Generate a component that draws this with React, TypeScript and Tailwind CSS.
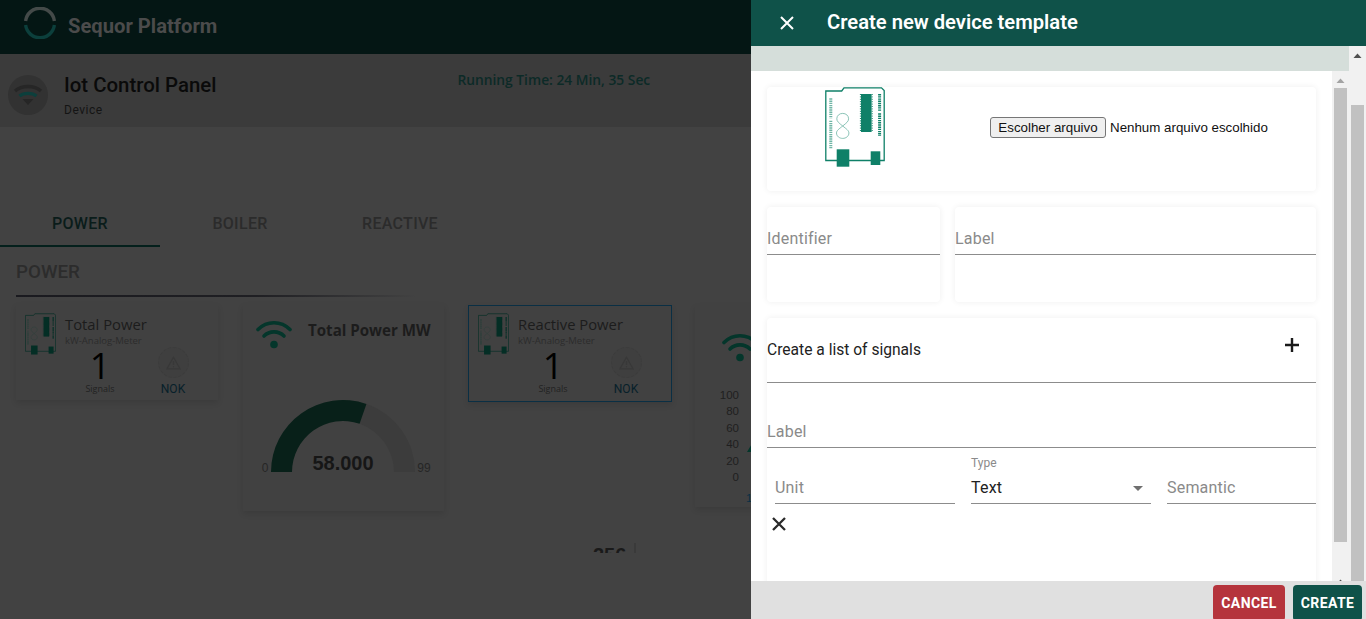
import React from "react";

function Board({ w, h, c, light }: { w: number; h: number; c: string; light: string }) {
  return (
    <svg width={w} height={h} viewBox="0 0 60 80" className="block shrink-0">
      <path d="M0.8 4 H16.7 L19 0.8 H56.5 L59.2 3.5 V73.5 H0.8 Z" fill="none" stroke={c} strokeWidth="1.3" />
      <rect x="36" y="7" width="10.6" height="38" fill={c} />
      <path d="M35.4 7 V45 M47.2 7 V45" stroke={c} strokeWidth="1" strokeDasharray="1 1.4" />
      <path d="M5.8 11.3 V31.3 M5.8 33.7 V61.3" stroke={light} strokeWidth="3" strokeDasharray="1.4 0.8" />
      <path d="M54.6 7 V23.7 M54.6 26.3 V49" stroke={c} strokeWidth="3" strokeDasharray="1.4 0.8" />
      <path d="M17.7 39 C14 36 11.8 34.5 11.8 31.8 C11.8 28.6 14.4 26.4 17.7 26.4 C21 26.4 23.6 28.6 23.6 31.8 C23.6 34.5 21.4 36 17.7 39 C14 42 11.5 43.5 11.5 46 C11.5 49.2 14.4 51.4 17.7 51.4 C21 51.4 23.9 49.2 23.9 46 C23.9 43.5 21.4 42 17.7 39 Z" fill="none" stroke={light} strokeWidth="0.8" />
      <rect x="11.7" y="62.3" width="12.6" height="17.4" fill={c} />
      <rect x="45.7" y="64.3" width="9.6" height="13.7" fill={c} />
    </svg>
  );
}

function WifiGlyph({ c = "#04362b" }: { c?: string }) {
  return (
    <svg width="36" height="30" viewBox="0 0 36 30" className="block shrink-0">
      <path d="M2 10.5 C11 1.5 25 1.5 34 10.5" fill="none" stroke={c} strokeWidth="3.6" strokeLinecap="round" />
      <path d="M8 17 C13.5 11.5 22.5 11.5 28 17" fill="none" stroke={c} strokeWidth="3.6" strokeLinecap="round" />
      <circle cx="18" cy="25.5" r="3.8" fill={c} />
    </svg>
  );
}

function StatusCard({ title, selected }: { title: string; selected?: boolean }) {
  return (
    <div
      className={
        "flex shrink-0 bg-[#414141] shadow-[0_3px_6px_rgba(0,0,0,0.1)] " +
        (selected
          ? "mt-px h-[97px] w-[204px] border border-[#0a2f44] pl-[9px] pt-[7px]"
          : "h-[96px] w-[202px] pl-[9px] pt-[9px]")
      }
    >
      <Board w={31} h={42} c="#042e25" light="#2a3f3a" />
      <div className="ml-[9px] flex w-[150px] flex-col pt-[2px]">
        <div className="font-['Open_Sans',sans-serif] text-[14.8px] leading-[18px] text-[#1c1c1c]">{title}</div>
        <div className="mt-[2px] font-['Open_Sans',sans-serif] text-[9.5px] leading-[12px] text-[#2c2c2c]">kW-Analog-Meter</div>
        <div className="flex">
          <div className="flex w-[70px] flex-col items-center">
            <div className="mt-[2px] font-['Open_Sans',sans-serif] text-[36px] font-medium leading-[34px] text-black">1</div>
            <div className="mt-[-1px] font-['Open_Sans',sans-serif] text-[9px] leading-[14px] text-[#222222]">Signals</div>
          </div>
          <div className="ml-[18px] flex w-[40px] flex-col items-center">
            <div className="flex h-[31px] w-[31px] items-center justify-center rounded-full border border-dashed border-[#3c3c3c] bg-[#3f3f3f]">
              <svg width="15" height="14" viewBox="0 0 15 14">
                <path d="M7.5 1.2 L14 12.8 H1 Z" fill="none" stroke="#383838" strokeWidth="1.2" />
                <path d="M7.5 5 V9" stroke="#383838" strokeWidth="1.2" />
                <circle cx="7.5" cy="10.8" r="0.7" fill="#383838" />
              </svg>
            </div>
            <div className="mt-[3px] text-[12px] leading-[16px] text-[#07202a]">NOK</div>
          </div>
        </div>
      </div>
    </div>
  );
}

function GaugeCard() {
  const cx = 100, cy = 167;
  const pt = (r: number, deg: number) => {
    const a = (deg * Math.PI) / 180;
    return `${cx + r * Math.cos(a)} ${cy - r * Math.sin(a)}`;
  };
  const R = 72, r = 51, e = 71;
  return (
    <div className="h-[207px] w-[201px] shrink-0 bg-[#414141] shadow-[0_3px_6px_rgba(0,0,0,0.1)]">
      <div className="flex items-start pl-[13px] pt-[15px]">
        <WifiGlyph />
        <div className="ml-[16px] pt-[1px] font-['Open_Sans',sans-serif] text-[15.1px] font-bold leading-[20px] text-[#1c1c1c]">Total Power MW</div>
      </div>
      <svg width="201" height="162" viewBox="0 0 201 162" className="mt-[-15px] block" overflow="visible">
        <g transform="translate(0,-29)">
          <path d={`M${pt(R, e)} A${R} ${R} 0 0 1 ${pt(R, 0)} L${pt(r, 0)} A${r} ${r} 0 0 0 ${pt(r, e)} Z`} fill="#3c3c3c" />
          <path d={`M${pt(R, 180)} A${R} ${R} 0 0 1 ${pt(R, e)} L${pt(r, e)} A${r} ${r} 0 0 0 ${pt(r, 180)} Z`} fill="#082019" />
          <text x="100" y="165" textAnchor="middle" fontFamily="Liberation Sans, sans-serif" fontWeight="700" fontSize="20" fill="#161616">58.000</text>
          <text x="22" y="167" textAnchor="middle" fontFamily="Liberation Sans, sans-serif" fontSize="12" fill="#262626">0</text>
          <text x="181" y="167" textAnchor="middle" fontFamily="Liberation Sans, sans-serif" fontSize="12" fill="#262626">99</text>
        </g>
      </svg>
    </div>
  );
}

function ChartCard() {
  return (
    <div className="mt-[1px] h-[202px] w-[200px] shrink-0 bg-[#414141] pl-[27px] pt-[27px] shadow-[0_3px_6px_rgba(0,0,0,0.1)]">
      <WifiGlyph />
      <div className="ml-[-27px] mt-[25px] flex">
        <div className="w-[44px] text-right font-['Liberation_Sans',sans-serif] text-[11.5px] leading-[16.4px] text-[#1f1f1f]">
          <div>100</div><div>80</div><div>60</div><div>40</div><div>20</div><div>0</div>
        </div>
        <svg width="60" height="120" viewBox="0 0 60 120" className="block">
          <path d="M8 65 L14 55 V65 Z" fill="#04362b" />
          <text x="7" y="115" fontFamily="Liberation Sans, sans-serif" fontSize="11.5" fill="#0a2f44">1</text>
        </svg>
      </div>
    </div>
  );
}

function Under({ className, children }: { className?: string; children?: React.ReactNode }) {
  return <div className={"flex items-end border-b border-[#8c8c8c] " + (className ?? "")}>{children}</div>;
}

const hint = "text-[16px] leading-[24px] tracking-[0.2px] text-[#8a8a8a]";

function Arrow({ up, c }: { up?: boolean; c: string }) {
  return (
    <svg width="9" height="5" viewBox="0 0 9 5" className="block">
      <path d={up ? "M0.5 5 L4.5 0.5 L8.5 5 Z" : "M0.5 0 L4.5 4.5 L8.5 0 Z"} fill={c} />
    </svg>
  );
}

export default function App() {
  return (
    <div className="relative h-[619px] w-full overflow-hidden bg-[#424242] font-[Roboto,sans-serif]">
      {/* page behind the drawer */}
      <header className="flex h-[54px] items-start bg-[#041614] pl-[24px]">
        <svg width="32" height="32" viewBox="0 0 32 32" className="mt-[7px] block">
          <path d="M1.6 14 A14.5 14.5 0 0 1 30.4 14" fill="none" stroke="#444a49" strokeWidth="3.4" />
          <path d="M1.6 18 A14.5 14.5 0 0 0 30.4 18" fill="none" stroke="#0c3f3c" strokeWidth="3.4" />
        </svg>
        <div className="ml-[12px] mt-[13px] text-[20.2px] font-bold leading-[26px] text-[#4b4b4b]">Sequor Platform</div>
      </header>
      <div className="flex h-[73px] bg-[#3b3b3b]">
        <div className="ml-[8px] mt-[21px] flex h-[40px] w-[40px] items-center justify-center rounded-full bg-[#323232]">
          <svg width="30" height="24" viewBox="0 0 30 24">
            <path d="M2 8 C9 2 21 2 28 8" fill="none" stroke="#262626" strokeWidth="3.4" />
            <path d="M6.5 13 C11 9.5 19 9.5 23.5 13" fill="none" stroke="#0c3f3c" strokeWidth="3.4" />
            <path d="M9.5 16 H20.5 L15 22 Z" fill="#262626" />
          </svg>
        </div>
        <div className="ml-[16px] flex flex-col pt-[18px]">
          <div className="text-[20.4px] font-medium leading-[26px] text-[#0a0a0a]">Iot Control Panel</div>
          <div className="mt-[3px] text-[12px] leading-[18px] tracking-[0.5px] text-[#141414]">Device</div>
        </div>
        <div className="ml-[241px] pt-[16px] font-['Open_Sans',sans-serif] text-[13.8px] font-semibold leading-[20px] text-[#0c2a27]">
          Running Time: 24 Min, 35 Sec
        </div>
      </div>

      <div className="h-[426px] overflow-hidden">
        <div className="mt-[72px] flex h-[48px]">
          <div className="flex w-[160px] items-center justify-center border-b-2 border-[#04201c] pt-[3px] text-[16px] font-medium tracking-[0.3px] text-[#0a1c1a]">POWER</div>
          <div className="flex w-[160px] items-center justify-center pt-[1px] text-[16px] font-medium tracking-[0.3px] text-[#2b2b2b]">BOILER</div>
          <div className="flex w-[160px] items-center justify-center pt-[1px] text-[16px] font-medium tracking-[0.3px] text-[#2b2b2b]">REACTIVE</div>
        </div>
        <div className="ml-[16px] mt-[12px] w-[400px] text-[18.8px] font-medium leading-[26px] text-[#2c2c2c]">POWER</div>
        <div className="ml-[16px] mt-[10px] h-[2px] w-[400px] bg-gradient-to-r from-[#1a1a1f] via-[#1f1f23] via-60% to-[#424242]" />
        <div className="mt-[7px] flex items-start pl-[16px]">
          <StatusCard title="Total Power" />
          <div className="ml-[25px]"><GaugeCard /></div>
          <div className="ml-[24px]"><StatusCard title="Reactive Power" selected /></div>
          <div className="ml-[23px]"><ChartCard /></div>
        </div>
        <div className="ml-[593px] mt-[32px] flex font-['Liberation_Sans',sans-serif] text-[20px] font-bold leading-[24px] text-[#1a1a1a]">
          256
          <div className="ml-[8px] h-[10px] w-[2px] bg-[#3a3a3a]" />
        </div>
      </div>

      {/* drawer */}
      <aside className="absolute bottom-0 right-0 top-0 flex w-[615px] flex-col bg-white">
        <div className="flex h-[46px] shrink-0 items-center bg-[#0f5249] pb-[1px] pl-[29px]">
          <svg width="14" height="14" viewBox="0 0 14 14" className="block">
            <path d="M1 1 L13 13 M13 1 L1 13" stroke="#ffffff" strokeWidth="2" />
          </svg>
          <div className="ml-[33px] pb-[1px] text-[20.2px] font-semibold leading-[26px] text-white">Create new device template</div>
        </div>

        <div className="flex min-h-0 flex-1">
          <div className="flex min-w-0 flex-1 flex-col">
            <div className="h-[25px] shrink-0 bg-[#d5deda]" />
            <div className="flex min-h-0 flex-1">
              <div className="min-w-0 flex-1 overflow-hidden px-[16px] pt-[16px]">
                <div className="flex h-[104px] rounded-[4px] bg-white shadow-[0_0_6px_rgba(0,0,0,0.07)]">
                  <div className="ml-[58px]"><Board w={60} h={80} c="#0f8068" light="#6fb5a5" /></div>
                  <div className="ml-[105px] mt-[30px] flex h-[21px] items-center font-['Liberation_Sans',sans-serif] text-[13.33px] text-[#111111]">
                    <div className="flex h-[21px] w-[116px] items-center justify-center rounded-[3px] border border-[#767676] bg-[#efefef]">Escolher arquivo</div>
                    <div className="ml-[4px]">Nenhum arquivo escolhido</div>
                  </div>
                </div>

                <div className="mt-[16px] flex gap-[15px]">
                  <div className="h-[95px] w-[173px] rounded-[4px] bg-white shadow-[0_0_6px_rgba(0,0,0,0.07)]">
                    <Under className={"h-[48px] pb-[3px] " + hint}>Identifier</Under>
                  </div>
                  <div className="h-[95px] flex-1 rounded-[4px] bg-white shadow-[0_0_6px_rgba(0,0,0,0.07)]">
                    <Under className={"h-[48px] pb-[3px] " + hint}>Label</Under>
                  </div>
                </div>

                <div className="mt-[16px] h-[300px] rounded-[4px] bg-white shadow-[0_0_6px_rgba(0,0,0,0.07)]">
                  <div className="flex h-[65px] items-start justify-between border-b border-[#8c8c8c]">
                    <div className="pt-[21px] text-[15.6px] leading-[22px] text-[#222222]">Create a list of signals</div>
                    <svg width="16" height="16" viewBox="0 0 16 16" className="mr-[16px] mt-[19px] block">
                      <path d="M8 1 V15 M1 8 H15" stroke="#1a1a1a" strokeWidth="2.4" />
                    </svg>
                  </div>
                  <Under className={"mt-[33px] h-[32px] pb-[3px] " + hint}>Label</Under>
                  <div className="flex">
                    <Under className={"ml-[8px] mt-[24px] h-[32px] w-[180px] pb-[3px] " + hint}>Unit</Under>
                    <div className="ml-[16px] w-[180px]">
                      <div className="mt-[7px] text-[12px] leading-[16px] text-[#8a8a8a]">Type</div>
                      <Under className="mt-[1px] h-[32px] justify-between pb-[3px] text-[16px] leading-[24px] tracking-[0.2px] text-[#222222]">
                        Text
                        <svg width="10" height="5" viewBox="0 0 10 5" className="mb-[9px] mr-[8px] block">
                          <path d="M0 0 H10 L5 5 Z" fill="#6f6f6f" />
                        </svg>
                      </Under>
                    </div>
                    <Under className={"ml-[16px] mt-[24px] h-[32px] flex-1 pb-[3px] " + hint}>Semantic</Under>
                  </div>
                  <svg width="16" height="16" viewBox="0 0 16 16" className="ml-[4px] mt-[12px] block">
                    <path d="M2 2 L14 14 M14 2 L2 14" stroke="#2a2a2a" strokeWidth="2.3" />
                  </svg>
                </div>
              </div>
              {/* inner scrollbar */}
              <div className="flex w-[17px] shrink-0 flex-col items-center overflow-hidden bg-[#f1f1f1]">
                <div className="mt-[7px] shrink-0"><Arrow up c="#a3a3a3" /></div>
                <div className="mt-[5px] h-[454px] w-[13px] shrink-0 bg-[#c1c1c1]" />
                <div className="mt-[37px] shrink-0"><Arrow up c="#505050" /></div>
              </div>
            </div>
          </div>
          {/* outer scrollbar */}
          <div className="flex w-[17px] shrink-0 flex-col items-center bg-[#f1f1f1]">
            <div className="mt-[7px]"><Arrow up c="#505050" /></div>
            <div className="mt-[47px] w-[13px] flex-1 bg-[#c1c1c1]" />
          </div>
        </div>

        <div className="flex h-[38px] shrink-0 justify-end gap-[8px] bg-[#e0e0e0] pr-[4px] pt-[4px]">
          <div className="flex h-[36px] w-[72px] items-center justify-center rounded-[4px] bg-[#b5343c] text-[14px] font-bold tracking-[0.4px] text-white">CANCEL</div>
          <div className="flex h-[36px] w-[69px] items-center justify-center rounded-[4px] bg-[#0f5249] text-[14px] font-bold tracking-[0.4px] text-white">CREATE</div>
        </div>
      </aside>
    </div>
  );
}
